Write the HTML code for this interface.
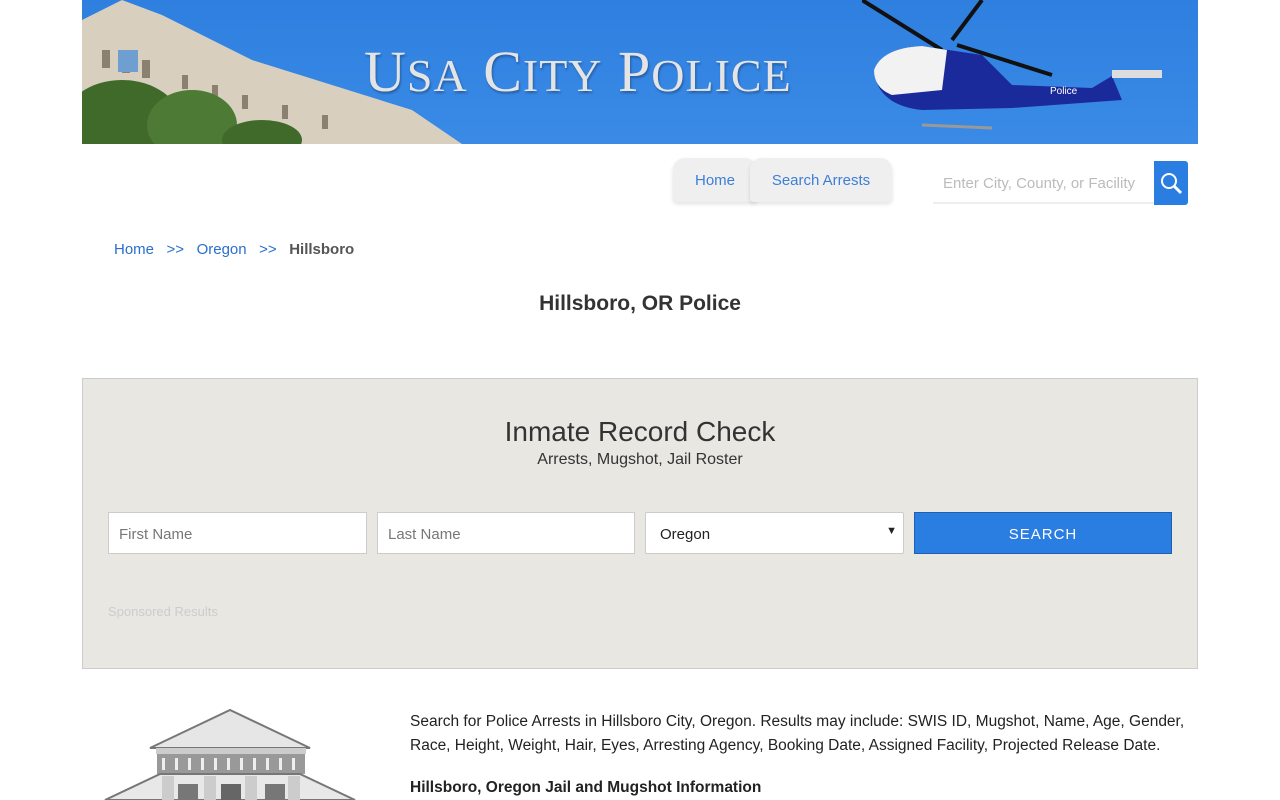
<!DOCTYPE html>
<html><head><meta charset="utf-8"><style>
*{box-sizing:border-box;margin:0;padding:0}
body{width:1280px;height:800px;overflow:hidden;background:#fff;font-family:"Liberation Sans",sans-serif;color:#222;position:relative}
.a{position:absolute}
.banner{left:82px;top:0;width:1116px;height:144px;background:linear-gradient(180deg,#2f7fe0,#3a8ae6);overflow:hidden}
.title{left:282px;top:38px;font-family:"Liberation Serif",serif;font-size:58px;color:#e4e4e4;letter-spacing:1px;text-shadow:1px 2px 2px rgba(0,0,0,.3)}
.title span{font-size:46px}
.tab{top:158px;height:44px;background:#efefef;border-radius:12px 12px 4px 4px;color:#3d7fd6;font-size:15px;line-height:46px;text-align:center;box-shadow:0 2px 4px rgba(0,0,0,.12)}
a{color:#2a6fcc;text-decoration:none}
.inp{background:#fff;border:1px solid #ccc;height:42px;top:512px;font-size:15px;color:#777;padding:13px 10px}
</style></head><body>
<div class="a banner">
 <svg class="a" style="left:0;top:0" width="380" height="144">
  <polygon points="0,20 40,0 80,15 170,60 330,110 380,144 0,144" fill="#d8cfbf"/>
  <g fill="#8b8170"><rect x="20" y="50" width="8" height="18"/><rect x="40" y="55" width="8" height="18"/><rect x="60" y="60" width="8" height="18"/><rect x="100" y="75" width="6" height="14"/><rect x="130" y="85" width="6" height="14"/><rect x="160" y="95" width="6" height="14"/><rect x="200" y="105" width="6" height="14"/><rect x="240" y="115" width="6" height="14"/></g>
  <rect x="36" y="50" width="20" height="22" fill="#6e9fd0"/>
  <ellipse cx="40" cy="125" rx="60" ry="45" fill="#3f6a2a"/><ellipse cx="110" cy="125" rx="45" ry="35" fill="#4d7a34"/><ellipse cx="180" cy="140" rx="40" ry="20" fill="#3f6a2a"/>
 </svg>
 <div class="a title">U<span>SA</span> C<span>ITY</span> P<span>OLICE</span></div>
 <svg class="a" style="left:780px;top:0" width="336" height="144">
  <line x1="0" y1="0" x2="80" y2="50" stroke="#111" stroke-width="4"/><line x1="120" y1="0" x2="90" y2="40" stroke="#111" stroke-width="4"/><line x1="95" y1="45" x2="190" y2="75" stroke="#111" stroke-width="4"/>
  <path d="M12,70 Q20,48 60,46 L120,55 L150,85 L230,88 L250,76 L260,100 L150,108 L60,110 Q15,105 12,70Z" fill="#1a2a9a"/>
  <path d="M12,70 Q20,48 60,46 L85,50 L80,90 L30,95 Q12,88 12,70Z" fill="#f2f2f2"/>
  <line x1="60" y1="125" x2="130" y2="128" stroke="#999" stroke-width="3"/><rect x="250" y="70" width="50" height="8" fill="#ddd"/>
  <text x="188" y="94" font-size="10" fill="#fff" font-family="Liberation Sans">Police</text>
 </svg>
</div>
<div class="a tab" style="left:673px;width:84px">Home</div>
<div class="a tab" style="left:750px;width:142px">Search Arrests</div>
<div class="a" style="left:933px;top:161px;width:221px;height:43px;border-bottom:2px solid #eee;font-size:15px;color:#bbb;padding:14px 10px">Enter City, County, or Facility</div>
<div class="a" style="left:1154px;top:161px;width:34px;height:44px;background:#2a7de1;border-radius:0 3px 3px 0">
 <svg width="34" height="44"><circle cx="15" cy="20" r="7" fill="none" stroke="#fff" stroke-width="2"/><line x1="20" y1="25" x2="27" y2="32" stroke="#fff" stroke-width="3"/></svg></div>
<div class="a" style="left:114px;top:241px;font-size:15px"><a>Home</a> &nbsp;&nbsp;<a>&gt;&gt;</a>&nbsp;&nbsp; <a>Oregon</a> &nbsp;&nbsp;<a>&gt;&gt;</a>&nbsp;&nbsp; <b style="color:#555">Hillsboro</b></div>
<div class="a" style="left:0;width:1280px;top:292px;text-align:center;font-size:21px;font-weight:bold;color:#333">Hillsboro, OR Police</div>
<div class="a" style="left:82px;top:378px;width:1116px;height:291px;background:#e8e7e2;border:1px solid #ccc"></div>
<div class="a" style="left:0;width:1280px;top:416px;text-align:center;font-size:28px;color:#333">Inmate Record Check</div>
<div class="a" style="left:0;width:1280px;top:451px;text-align:center;font-size:16px;color:#333">Arrests, Mugshot, Jail Roster</div>
<div class="a inp" style="left:108px;width:259px">First Name</div>
<div class="a inp" style="left:377px;width:258px">Last Name</div>
<div class="a inp" style="left:645px;width:259px;color:#222;padding-left:14px;border-radius:2px">Oregon<span style="position:absolute;right:6px;top:12px;font-size:11px">&#9660;</span></div>
<div class="a" style="left:914px;top:512px;width:258px;height:42px;background:#2a7de1;border:1px solid #1e5fb0;color:#fff;font-size:15px;letter-spacing:1px;text-align:center;line-height:44px">SEARCH</div>
<div class="a" style="left:108px;top:604px;font-size:13px;color:#ccc">Sponsored Results</div>
<svg class="a" style="left:100px;top:708px" width="260" height="92">
 <polygon points="50,40 130,2 210,40" fill="#e6e6e6" stroke="#777" stroke-width="2"/>
 <rect x="56" y="40" width="150" height="6" fill="#ccc"/><rect x="57" y="46" width="148" height="20" fill="#999"/>
 <g fill="#eee"><rect x="62" y="50" width="3" height="12"/><rect x="75" y="50" width="3" height="12"/><rect x="88" y="50" width="3" height="12"/><rect x="101" y="50" width="3" height="12"/><rect x="114" y="50" width="3" height="12"/><rect x="127" y="50" width="3" height="12"/><rect x="140" y="50" width="3" height="12"/><rect x="153" y="50" width="3" height="12"/><rect x="166" y="50" width="3" height="12"/><rect x="179" y="50" width="3" height="12"/><rect x="192" y="50" width="3" height="12"/></g>
 <polygon points="5,92 60,66 200,66 255,92" fill="#e8e8e8" stroke="#777" stroke-width="2"/>
 <rect x="78" y="76" width="20" height="16" fill="#777"/><rect x="121" y="76" width="20" height="16" fill="#666"/><rect x="165" y="76" width="20" height="16" fill="#777"/>
 <g fill="#ccc"><rect x="62" y="68" width="12" height="24"/><rect x="104" y="68" width="12" height="24"/><rect x="145" y="68" width="12" height="24"/><rect x="188" y="68" width="12" height="24"/></g>
</svg>
<div class="a" style="left:410px;top:710px;width:790px;font-size:15.5px;line-height:24px;color:#222">Search for Police Arrests in Hillsboro City, Oregon. Results may include: SWIS ID, Mugshot, Name, Age, Gender, Race, Height, Weight, Hair, Eyes, Arresting Agency, Booking Date, Assigned Facility, Projected Release Date.</div>
<div class="a" style="left:410px;top:779px;font-size:15.5px;font-weight:bold;color:#222">Hillsboro, Oregon Jail and Mugshot Information</div>
</body></html>
